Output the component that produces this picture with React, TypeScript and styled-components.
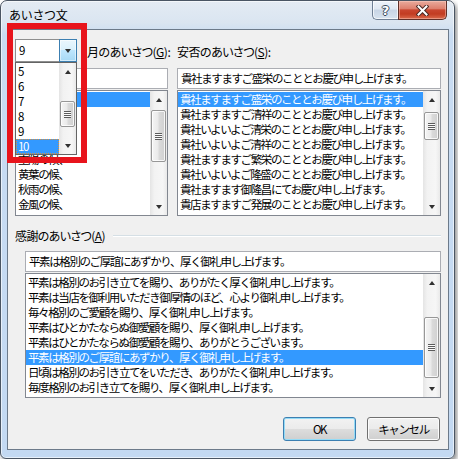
import React from 'react';
import styled, { createGlobalStyle } from 'styled-components';

const FONT = `"Noto Sans CJK JP", "Noto Sans CJK SC", "Noto Sans", sans-serif`;

const GlobalStyle = createGlobalStyle`
  html, body {
    margin: 0;
    padding: 0;
    background: #ffffff;
  }
  body {
    font-family: ${FONT};
    font-size: 12px;
    color: #000;
  }
`;

// dialog text is set narrow, close to the MS UI Gothic advance
const tightText = `
  font-size: 11.5px;
  letter-spacing: -1.4px;
`;

// window frame
const Window = styled.div`
  position: relative;
  box-sizing: border-box;
  width: 455px;
  height: 459px;
  display: flex;
  flex-direction: column;
  padding: 0 5px 8px 6px;
  border: 1px solid #4a5563;
  border-radius: 7px 7px 6px 6px;
  background: linear-gradient(180deg, #e4ebf3 0px, #dae5f1 22px, #c9dcf2 34px, #c3d9f2 100%);
  box-shadow: inset 0 0 0 1px rgba(255, 255, 255, 0.6), 2px 3px 5px rgba(0, 0, 0, 0.45);
`;

const TitleBar = styled.div`
  height: 28px;
  flex: none;
  display: flex;
  align-items: flex-start;
  justify-content: space-between;
  padding: 0 2px;
`;

const Caption = styled.span`
  margin-top: 6px;
  line-height: 16px;
  font-size: 12px;
  letter-spacing: -0.3px;
  color: #000;
`;

const CaptionButtons = styled.div`
  display: flex;
`;

const HelpButton = styled.div`
  box-sizing: border-box;
  width: 26px;
  height: 19px;
  display: flex;
  align-items: center;
  justify-content: center;
  border: 1px solid #6f7f94;
  border-top: none;
  border-right: none;
  border-radius: 0 0 0 5px;
  background: linear-gradient(180deg, #eef3f9 0%, #e0e8f2 45%, #c8d5e5 50%, #d8e3ef 100%);
  box-shadow: inset 0 0 0 1px rgba(255, 255, 255, 0.7);
  font-family: "DejaVu Sans", sans-serif;
  font-weight: bold;
  font-size: 13px;
  color: #ffffff;
  text-shadow: -1px 0 #3b4a5c, 1px 0 #3b4a5c, 0 1px #3b4a5c, 0 -1px #3b4a5c;
`;

const CloseButton = styled.div`
  box-sizing: border-box;
  width: 49px;
  height: 19px;
  display: flex;
  align-items: center;
  justify-content: center;
  border: 1px solid #5f2f28;
  border-top: none;
  border-radius: 0 0 5px 0;
  background: linear-gradient(180deg, #e9ab9d 0%, #dd806e 42%, #c9462f 50%, #c23c22 72%, #da6a4c 100%);
  box-shadow: inset 0 0 0 1px rgba(255, 210, 200, 0.45);
`;

const Client = styled.div`
  flex: 1;
  box-sizing: border-box;
  border: 1px solid #6c7a8a;
  background: #f0f0f0;
  padding: 9px 7px 0 7px;
  display: flex;
  flex-direction: column;
`;

const TopGrid = styled.div`
  display: grid;
  grid-template-columns: 153px 264px;
  column-gap: 9px;
`;

const Column = styled.div`
  display: flex;
  flex-direction: column;
  min-width: 0;
`;

const HeaderRow = styled.div`
  height: 23px;
  display: flex;
  align-items: center;
`;

const Label = styled.span<{ $indent?: number }>`
  margin-left: ${p => p.$indent ?? 0}px;
  padding-top: 2px;
  white-space: nowrap;
  font-feature-settings: "palt";
  letter-spacing: -0.5px;
  line-height: 15px;
`;

// combo box with open drop list
const Combo = styled.div`
  position: relative;
  box-sizing: border-box;
  width: 62px;
  height: 23px;
  flex: none;
  display: flex;
  border: 1px solid #8e8f8f;
  background: #fff;
`;

const ComboValue = styled.div`
  flex: 1;
  padding-left: 3px;
  line-height: 21px;
  ${tightText}
`;

const DropButton = styled.div`
  box-sizing: border-box;
  width: 18px;
  margin: -1px -1px -1px 0;
  display: flex;
  align-items: center;
  justify-content: center;
  border: 1px solid #3c7fb1;
  background: linear-gradient(180deg, #eaf6fd 0%, #d9f0fc 48%, #bee6fd 50%, #a7d9f5 100%);
  box-shadow: inset 0 0 0 1px rgba(255, 255, 255, 0.5);
`;

const DropList = styled.div`
  position: absolute;
  left: -1px;
  top: calc(100% + 1px);
  box-sizing: border-box;
  width: 62px;
  height: 93px;
  display: flex;
  border: 1px solid #646464;
  background: #fff;
  z-index: 2;
`;

const TextBox = styled.div<{ $gap: number }>`
  box-sizing: border-box;
  height: 21px;
  margin-top: ${p => p.$gap}px;
  border: 1px solid #abadb3;
  background: #fff;
  padding: 0 3px;
  line-height: 19px;
  white-space: nowrap;
  overflow: hidden;
  ${tightText}
`;

const ListFrame = styled.div<{ $height: number }>`
  box-sizing: border-box;
  height: ${p => p.$height}px;
  margin-top: 1px;
  border: 1px solid #828790;
  background: #fff;
  display: flex;
`;

const ItemColumn = styled.div`
  flex: 1;
  min-width: 0;
  padding-top: 1px;
  overflow: hidden;
`;

const Item = styled.div<{ $selected?: boolean; $focused?: boolean }>`
  box-sizing: border-box;
  height: 15px;
  line-height: 15px;
  padding-left: 2px;
  white-space: nowrap;
  overflow: hidden;
  ${tightText}
  background: ${p => (p.$selected ? '#3399ff' : 'transparent')};
  color: ${p => (p.$selected ? '#ffffff' : '#000000')};
  outline: ${p => (p.$focused ? '1px dotted #d9913f' : 'none')};
  outline-offset: -1px;
`;

const ScrollBar = styled.div`
  width: 17px;
  flex: none;
  display: flex;
  flex-direction: column;
  background: linear-gradient(90deg, #e4e4e4 0%, #f2f2f2 25%, #f6f6f6 75%, #e9e9e9 100%);
`;

const ArrowButton = styled.div`
  height: 17px;
  flex: none;
  display: flex;
  align-items: center;
  justify-content: center;
`;

const Arrow = styled.span<{ $dir: 'up' | 'down'; $size?: number }>`
  width: 0;
  height: 0;
  border-left: ${p => p.$size ?? 3.5}px solid transparent;
  border-right: ${p => p.$size ?? 3.5}px solid transparent;
  ${p =>
    p.$dir === 'up'
      ? `border-bottom: ${Math.round((p.$size ?? 3.5) + 0.5)}px solid #303030;`
      : `border-top: ${Math.round((p.$size ?? 3.5) + 0.5)}px solid #303030;`}
`;

const Track = styled.div`
  flex: 1;
  min-height: 0;
  display: flex;
  flex-direction: column;
  align-items: center;
`;

const Thumb = styled.div<{ $offset: number; $size: number }>`
  box-sizing: border-box;
  margin-top: ${p => p.$offset}px;
  height: ${p => p.$size}px;
  width: 15px;
  flex: none;
  display: flex;
  align-items: center;
  justify-content: center;
  border: 1px solid #979797;
  border-radius: 2px;
  background: linear-gradient(90deg, #f5f5f5 0%, #eaeaea 45%, #dadada 55%, #d0d0d0 100%);
  box-shadow: inset 0 0 0 1px rgba(255, 255, 255, 0.8);
`;

const Grip = styled.div`
  width: 7px;
  height: 7px;
  background: repeating-linear-gradient(180deg, #5c5c5c 0 1px, #fbfbfb 1px 2px);
`;

const GroupHeader = styled.div`
  margin-top: 12px;
  height: 15px;
  display: flex;
  align-items: center;
  gap: 8px;

  &::after {
    content: '';
    flex: 1;
    height: 0;
    border-top: 1px solid #d5dfe5;
    border-bottom: 1px solid #ffffff;
  }
`;

const GroupLabel = styled.span`
  line-height: 15px;
  white-space: nowrap;
  font-feature-settings: "palt";
  letter-spacing: -0.6px;
`;

const Indented = styled.div`
  display: flex;
  flex-direction: column;
  padding-left: 10px;
`;

const ButtonRow = styled.div`
  margin-top: 19px;
  display: flex;
  justify-content: flex-end;
  gap: 11px;
  padding-right: 1px;
`;

const PushButton = styled.button<{ $default?: boolean }>`
  box-sizing: border-box;
  width: 73px;
  height: 24px;
  padding: 0;
  font-family: ${FONT};
  color: #000;
  ${tightText}
  border: 1px solid ${p => (p.$default ? '#3c7fb1' : '#707070')};
  border-radius: 3px;
  background: linear-gradient(180deg, #f2f2f2 0%, #ebebeb 49%, #dddddd 50%, #cfcfcf 100%);
  box-shadow: inset 0 0 0 1px ${p => (p.$default ? '#94dbf6' : '#fcfcfc')};
`;

// annotation drawn over the screenshot
const RedFrame = styled.div`
  position: absolute;
  left: 6px;
  top: 22px;
  width: 80px;
  height: 140px;
  box-sizing: border-box;
  border: 6px solid #e8141c;
  z-index: 3;
  pointer-events: none;
`;

const monthItems = ['初秋の候、', '新秋の候、', '新涼の候、', '爽秋の候、', '重陽の候、', '黄葉の候、', '秋雨の候、', '金風の候、'];

const safetyItems = [
  '貴社ますますご盛栄のこととお慶び申し上げます。',
  '貴社ますますご清祥のこととお慶び申し上げます。',
  '貴社いよいよご清栄のこととお慶び申し上げます。',
  '貴社いよいよご清祥のこととお慶び申し上げます。',
  '貴社ますますご繁栄のこととお慶び申し上げます。',
  '貴社いよいよご隆盛のこととお慶び申し上げます。',
  '貴社ますます御隆昌にてお慶び申し上げます。',
  '貴店ますますご発展のこととお慶び申し上げます。',
];

const thanksItems = [
  '平素は格別のお引き立てを賜り、ありがたく厚く御礼申し上げます。',
  '平素は当店を御利用いただき御厚情のほど、心より御礼申し上げます。',
  '毎々格別のご愛顧を賜り、厚く御礼申し上げます。',
  '平素はひとかたならぬ御愛顧を賜り、厚く御礼申し上げます。',
  '平素はひとかたならぬ御愛顧を賜り、ありがとうございます。',
  '平素は格別のご厚誼にあずかり、厚く御礼申し上げます。',
  '日頃は格別のお引き立てをいただき、ありがたく御礼申し上げます。',
  '毎度格別のお引き立てを賜り、厚く御礼申し上げます。',
];

const monthNumbers = ['5', '6', '7', '8', '9', '10'];

type ScrollProps = { offset: number; size: number };

const VScroll: React.FC<ScrollProps> = ({ offset, size }) => (
  <ScrollBar>
    <ArrowButton>
      <Arrow $dir="up" />
    </ArrowButton>
    <Track>
      <Thumb $offset={offset} $size={size}>
        <Grip />
      </Thumb>
    </Track>
    <ArrowButton>
      <Arrow $dir="down" />
    </ArrowButton>
  </ScrollBar>
);

type ListProps = {
  items: string[];
  selected: number;
  height: number;
  thumb: ScrollProps;
};

const ListView: React.FC<ListProps> = ({ items, selected, height, thumb }) => (
  <ListFrame $height={height}>
    <ItemColumn>
      {items.map((text, i) => (
        <Item key={i} $selected={i === selected}>
          {text}
        </Item>
      ))}
    </ItemColumn>
    <VScroll {...thumb} />
  </ListFrame>
);

const CloseGlyph = () => (
  <svg width="13" height="11" viewBox="0 0 13 11">
    <path d="M2.5 1.5 L10.5 9.5 M10.5 1.5 L2.5 9.5" stroke="#4a2a25" strokeWidth="4" strokeLinecap="square" />
    <path d="M2.5 1.5 L10.5 9.5 M10.5 1.5 L2.5 9.5" stroke="#ffffff" strokeWidth="2" strokeLinecap="square" />
  </svg>
);

export default function App() {
  return (
    <>
      <GlobalStyle />
      <Window>
        <TitleBar>
          <Caption>あいさつ文</Caption>
          <CaptionButtons>
            <HelpButton>?</HelpButton>
            <CloseButton>
              <CloseGlyph />
            </CloseButton>
          </CaptionButtons>
        </TitleBar>
        <Client>
          <TopGrid>
            <Column>
              <HeaderRow>
                <Combo>
                  <ComboValue>9</ComboValue>
                  <DropButton>
                    <Arrow $dir="down" $size={3.5} />
                  </DropButton>
                  <DropList>
                    <ItemColumn>
                      {monthNumbers.map(n => (
                        <Item key={n} $selected={n === '10'} $focused={n === '10'}>
                          {n}
                        </Item>
                      ))}
                    </ItemColumn>
                    <VScroll offset={21} size={26} />
                  </DropList>
                </Combo>
                <Label $indent={10}>
                  月のあいさつ(<u>G</u>):
                </Label>
              </HeaderRow>
              <TextBox $gap={6}>初秋の候、</TextBox>
              <ListView items={monthItems} selected={0} height={126} thumb={{ offset: 2, size: 52 }} />
            </Column>
            <Column>
              <HeaderRow>
                <Label>
                  安否のあいさつ(<u>S</u>):
                </Label>
              </HeaderRow>
              <TextBox $gap={6}>{safetyItems[0]}</TextBox>
              <ListView items={safetyItems} selected={0} height={126} thumb={{ offset: 4, size: 28 }} />
            </Column>
          </TopGrid>

          <GroupHeader>
            <GroupLabel>
              感謝のあいさつ(<u>A</u>)
            </GroupLabel>
          </GroupHeader>
          <Indented>
            <TextBox $gap={8}>{thanksItems[5]}</TextBox>
            <ListView items={thanksItems} selected={5} height={125} thumb={{ offset: 26, size: 61 }} />
          </Indented>

          <ButtonRow>
            <PushButton $default>OK</PushButton>
            <PushButton>キャンセル</PushButton>
          </ButtonRow>
        </Client>
        <RedFrame />
      </Window>
    </>
  );
}
